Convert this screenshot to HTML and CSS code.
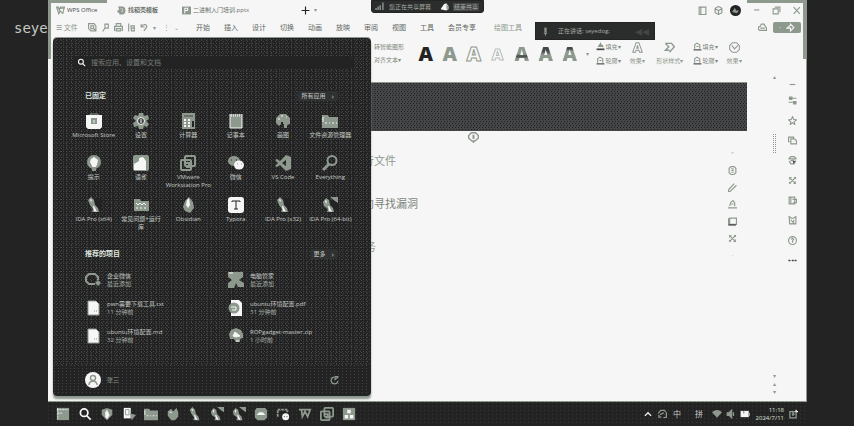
FILE: index.html
```html
<!DOCTYPE html>
<html lang="zh-CN">
<head>
<meta charset="utf-8">
<title>WPS Office</title>
<link rel="stylesheet" href="styles.css">
</head>
<body>
<svg class="defs" aria-hidden="true">
  <symbol id="search" viewBox="0 0 16 16"><circle cx="7" cy="6.500" r="4.300" fill="none" stroke="currentColor" stroke-width="2"/><path d="M10 10l4.500 4.500" stroke="currentColor" stroke-width="2"/></symbol>
  <symbol id="ida" viewBox="0 0 16 16"><path d="M8 1h8v11l-5 2z" fill="#232323"/><path d="M2 3l3-3 3 3 1 5 3 3 1 4H6l1-3-3-4z" fill="#8e998e"/><path d="M4 2l2 1-1 2zM7 9l1 5 3 1-3-6z" fill="#f6f6f6"/></symbol>
  <symbol id="ida64" viewBox="0 0 16 16"><path d="M8 4h7v8l-5 2z" fill="#232323"/><path d="M8 0h8v6l-3-2z" fill="#8e998e"/><path d="M1 5l3-4 3 2 1 5 3 3 1 4H5l1-3-4-3z" fill="#8e998e"/><path d="M3 3l2 1-1 3zM6 9l1 5 3 1-3-6z" fill="#f6f6f6"/></symbol>
  <symbol id="vm" viewBox="0 0 16 16"><g fill="none" stroke="#8e998e" stroke-width="2"><rect x="5" y="1" width="10" height="10" rx="1"/><rect x="1" y="5" width="10" height="10" rx="1"/><path d="M5 8h4v4H6"/></g></symbol>
  <symbol id="folder" viewBox="0 0 16 16"><path d="M0 2h6l1 2h9v11H0z" fill="#8e998e"/><path d="M1 4v5M3 10h2m2 0h1m2 0h2m2 0h1" stroke="#f6f6f6"/></symbol>
  <symbol id="file" viewBox="0 0 16 16"><path d="M3 1h8l3 3v11H3z" fill="#f6f6f6" stroke="#8e998e"/><path d="M9 11h1m1 0h1" stroke="#8e998e"/></symbol>
  <symbol id="bucket" viewBox="0 0 16 16"><path d="M8 1v4M4 9l2-4h4l3 4" fill="#8e998e" stroke="#8e998e" stroke-width="2"/><path d="M1 13h14" stroke="#444547" stroke-width="3"/></symbol>
  <symbol id="pen" viewBox="0 0 16 16"><path d="M3 12V5l4-3 5 3v7M6 8h4" fill="none" stroke="#8e998e" stroke-width="2"/><path d="M1 14h14" stroke="#444547" stroke-width="2"/></symbol>
  <symbol id="tools" viewBox="0 0 16 16"><path d="M2 2l12 12M14 2L2 14M2 6l4-4M10 14l4-4M11 2l3 3M2 11l3 3" fill="none" stroke="currentColor" stroke-width="2"/></symbol>
  <symbol id="copy" viewBox="0 0 16 16"><path d="M5 14h10V8l-4-3H5zM3 10H1V2h9v3" fill="none" stroke="currentColor" stroke-width="2"/></symbol>
</svg>
<div class="desktop">
  <div class="terminal">seye</div>
  <main class="window">
    <header class="titlebar">
      <div class="tab tab-home"><svg class="i8" viewBox="0 0 16 16"><path d="M1 2h3l2 6 2-6h7l-3 11-4-4-3 5z" fill="none" stroke="#8e998e" stroke-width="2"/><path d="M3 4h11" stroke="#8e998e" stroke-width="2"/></svg>WPS Office</div>
      <div class="tab tab-docer"><svg class="i8" viewBox="0 0 16 16"><path d="M2 1h7a6 7 0 0 1 0 14H4v-3H1V7h3z" fill="#8e998e"/><path d="M6 5h4v5H7" fill="none" stroke="#f6f6f6"/></svg><b>找稻壳模板</b></div>
      <div class="tab tab-file"><svg class="i8" viewBox="0 0 16 16"><path d="M0 1h16v14H0z" fill="#8e998e"/><path d="M5 13V4h5v4H5" fill="none" stroke="#f6f6f6" stroke-width="2"/></svg>二进制入门培训.pptx</div>
      <button class="plus" aria-label="新建"><svg class="i8" viewBox="0 0 16 16"><path d="M8 1v14M1 8h14" stroke="#232323" stroke-width="2"/></svg></button><small>▾</small>
      <div class="winctl">
        <svg class="i8 near" viewBox="0 0 16 16"><path d="M2 2h12v13H2zM5 2v13" fill="none" stroke="#8e998e" stroke-width="2"/></svg>
        <svg class="i8 near" viewBox="0 0 16 16"><path d="M8 1l6 3v8l-6 3-6-3V4zM2 5l6 3 6-3M8 8v7" fill="none" stroke="#8e998e" stroke-width="2"/></svg>
        <svg class="i10" viewBox="0 0 16 16"><circle cx="8" cy="8" r="8" fill="#232323"/><path d="M3 10l4-6 2 4h4l-3 4z" fill="#8e998e"/></svg>
        <button aria-label="最小化"><svg class="i8" viewBox="0 0 16 16"><path d="M4 7h9" stroke="#8e998e" stroke-width="2"/></svg></button>
        <button aria-label="还原"><svg class="i8" viewBox="0 0 16 16"><path d="M2 5h9v9H2zM5 2h9v9" fill="none" stroke="#8e998e" stroke-width="2"/></svg></button>
        <button aria-label="关闭"><svg class="i8" viewBox="0 0 16 16"><path d="M3 2l11 12M14 2L3 14" stroke="#8e998e" stroke-width="2"/></svg></button>
      </div>
    </header>
    <nav class="menubar">
      <button class="filebtn">☰ 文件</button>
      <div class="quick">
        <svg class="i8" viewBox="0 0 16 16"><path d="M1 1h10l3 4v9H5l-4-4zM5 5h5v5H5zM9 9l5 5" fill="none" stroke="#8e998e" stroke-width="2"/></svg>
        <svg class="i8" viewBox="0 0 16 16"><path d="M3 15l4-6V2h6v7H7" fill="none" stroke="#8e998e" stroke-width="2"/></svg>
        <svg class="i8" viewBox="0 0 16 16"><path d="M4 6V1h8v5M1 14V6h14v8M4 14v-4h8v4z" fill="none" stroke="#8e998e" stroke-width="2"/></svg>
        <svg class="i8" viewBox="0 0 16 16"><path d="M3 1v14M7 5h6v9H8zM7 9h6" fill="none" stroke="#8e998e" stroke-width="2"/></svg>
        <svg class="i8" viewBox="0 0 16 16"><path d="M2 2v5h6M2 7c3-6 11-5 10 0l-5 7" fill="none" stroke="#8e998e" stroke-width="2"/></svg><small>▾</small>
        <span>⋮</span><small>⌄</small>
      </div>
      <div class="menus"><a>开始</a><a>插入</a><a>设计</a><a>切换</a><a>动画</a><a>放映</a><a>审阅</a><a>视图</a><a>工具</a><a>会员专享</a><a class="draw">绘图工具</a></div>
      <svg class="i8 cloud" viewBox="0 0 16 16"><path d="M1 12V7l3-1 2-4h5l2 4 2 2v5H3zM4 9h8" fill="none" stroke="#8e998e" stroke-width="2"/></svg>
      <button class="share" aria-label="分享"><span>·</span><svg class="i8" viewBox="0 0 16 16"><path d="M8 2l6 6-6 6V9H2l6-5z" fill="none" stroke="#f6f6f6" stroke-width="2"/></svg></button>
    </nav>
    <section class="ribbon">
      <div class="pair"><span>转智能图形</span><span>对齐文本▾</span></div>
      <div class="styles"><b class="a1">A</b><b>A</b><b class="a3">A</b><b class="a4">A</b><b class="a5">A</b><b class="a6">A</b><b class="a7">A</b></div>
      <small class="dot">▾</small>
      <div class="pair"><span><svg class="i8"><use href="#bucket"/></svg>填充▾</span><span><svg class="i8"><use href="#pen"/></svg>轮廓▾</span></div>
      <div class="big"><svg class="i10" viewBox="0 0 16 16"><path d="M1 15L6 1h4l5 14h-4l-1-3H6l-1 3zM7 9h2L8 5z" fill="none" stroke="#8e998e" stroke-width="1.500"/></svg><span>效果▾</span></div>
      <div class="big shape"><svg class="i10" viewBox="0 0 16 16"><path d="M2 2h9l4 5-7 8M2 2l5 5-5 5h6" fill="none" stroke="#8e998e" stroke-width="2"/></svg><span>形状样式▾</span></div>
      <div class="pair"><span><svg class="i8"><use href="#pen"/></svg>填充▾</span><span><svg class="i8"><use href="#pen"/></svg>轮廓▾</span></div>
      <div class="big"><svg class="i10" viewBox="0 0 16 16"><path d="M5 1h6l4 4v6l-4 4H5l-4-4V5zM4 5l4 5 5-5" fill="none" stroke="#8e998e" stroke-width="1.500"/></svg><span>效果▾</span></div>
    </section>
    <div class="work">
      <article class="page">
        <div class="banner"></div>
        <div class="locate"><svg class="i10" viewBox="0 0 16 16"><path d="M5 1h6l4 4v4l-5 4H6L1 9V5zM8 13v3" fill="none" stroke="#8e998e" stroke-width="2"/><path d="M8 4v6" stroke="#8e998e" stroke-width="3"/></svg></div>
        <div class="sheet">
          <div class="lines"><p>运行文件</p><p>逆向寻找漏洞</p><p class="indent">服务</p></div>
          <div class="float">
            <span>"</span>
            <svg class="i8" viewBox="0 0 16 16"><path d="M5 1L2 4v8l3 3M11 1l3 3v8l-3 3M5 1h6M5 15h6M6 5h4M6 8h4M6 11h4" fill="none" stroke="#8e998e" stroke-width="2"/></svg>
            <svg class="i8" viewBox="0 0 16 16"><path d="M1 12L11 1M4 15L15 4M1 12v3h3" fill="none" stroke="#8e998e" stroke-width="2"/></svg>
            <svg class="i8" viewBox="0 0 16 16"><path d="M3 11l2-7 4-3 3 4v6M6 7h4M0 14h16" fill="none" stroke="#8e998e" stroke-width="2"/></svg>
            <svg class="i8" viewBox="0 0 16 16"><path d="M3 2h12v11H3zM1 2v12h13" fill="none" stroke="#8e998e" stroke-width="2"/><path d="M1 14h13" stroke="#444547" stroke-width="2"/></svg>
            <svg class="i8"><use href="#tools"/></svg>
            <span>·</span>
          </div>
        </div>
      </article>
      <div class="scroll"><span>▴</span><i></i><div><span>▾</span><span>▴</span><span>▾</span></div></div>
      <aside class="side">
        <svg class="i8" viewBox="0 0 16 16"><path d="M3 8h10" stroke="#8e998e" stroke-width="2"/></svg>
        <svg class="i8" viewBox="0 0 16 16"><path d="M1 4h14M1 11h14" stroke="#8e998e" stroke-width="2"/><path d="M2 1h6v6H2zM9 9h6v6H9z" fill="#8e998e"/></svg>
        <svg class="i8" viewBox="0 0 16 16"><path d="M8 1l2 5 5 1-4 3 1 5-4-3-4 3 1-5-4-3 5-1z" fill="none" stroke="#8e998e" stroke-width="2"/></svg>
        <svg class="i8"><use href="#copy"/></svg>
        <svg class="i8" viewBox="0 0 16 16"><path d="M1 5l4-4h6l4 4M1 5h14M2 9l3 5h6l3-6M4 9l6-2" fill="none" stroke="#8e998e" stroke-width="2"/><path d="M8 8l5 1-3 5z" fill="#444547"/></svg>
        <svg class="i8"><use href="#tools"/></svg>
        <svg class="i8" viewBox="0 0 16 16"><path d="M5 1v14M2 2h10v12H2zM8 6h7v6H9" fill="none" stroke="#8e998e" stroke-width="2"/></svg>
        <svg class="i8" viewBox="0 0 16 16"><path d="M2 1l4 3h4l4-3v13H3zM5 7l6 6M11 7l-4 6" fill="none" stroke="#8e998e" stroke-width="2"/></svg>
        <svg class="i8" viewBox="0 0 16 16"><circle cx="8" cy="8" r="7" fill="none" stroke="#8e998e" stroke-width="2"/><path d="M5 6l3-2 2 2-2 3v3" fill="none" stroke="#8e998e" stroke-width="2"/></svg>
        <svg class="i8" viewBox="0 0 16 16"><path d="M0 8h16" stroke="#8e998e"/><path d="M1 8h3M7 8h3M12 8h3" stroke="#444547" stroke-width="3"/></svg>
      </aside>
    </div>
    <i class="corner left"></i><i class="corner right"></i>
  </main>

  <div class="sharebar"><svg class="i10" viewBox="0 0 16 16"><path d="M3 13v-3M6 13V8M9 13V6M13 13V2" stroke="#8e998e" stroke-width="2"/></svg><span>您正在共享屏幕</span><svg class="i8" viewBox="0 0 16 16"><path d="M1 13L7 4l4-2 4 5v6l-4 2z" fill="#f6f6f6"/><path d="M11 4l4 4v4l-3 2z" fill="#8e998e"/></svg><button>结束共享</button></div>
  <div class="speaking"><svg class="i8" viewBox="0 0 16 16"><path d="M8 1v9" stroke="#8e998e" stroke-width="4"/><path d="M5 11h6M8 11v4" stroke="#8e998e" stroke-width="2"/></svg><span>正在讲话: seyedog;</span><em>◂◂</em></div>

  <section class="start">
    <label class="searchbox"><svg class="i8"><use href="#search"/></svg><input type="text" placeholder="搜索应用、设置和文档" aria-label="搜索"></label>
    <div class="head pinned"><h2>已固定</h2><button>所有应用<span>›</span></button></div>
    <div class="apps">
      <a><svg viewBox="0 0 16 16"><path d="M4 3V1h8v2" fill="none" stroke="#8e998e"/><path d="M0 2h16v12l-2 2H2l-2-2z" fill="#f6f6f6"/><path d="M5 5h6v6H5z" fill="#8e998e"/><path d="M8 7v3" stroke="#f6f6f6"/></svg>Microsoft Store</a>
      <a><svg viewBox="0 0 16 16"><path d="M6 0h4l1 3 4-1 1 4-3 2 3 3-2 3-3-1-1 3H6l-1-3-4 1-1-4 3-2-3-3 2-3 3 1z" fill="#8e998e"/><circle cx="8" cy="8" r="3.500" fill="#444547" stroke="#f6f6f6"/><path d="M8 6v4" stroke="#f6f6f6"/></svg>设置</a>
      <a><svg viewBox="0 0 16 16"><path d="M2 0h13v16H2z" fill="#8e998e"/><path d="M4 6h2v2H4zm4 0h2v2H8zm-4 3h2v2H4zm4 0h2v2H8zm-4 3h2v2H4zm4 0h2v2H8z" fill="#f6f6f6"/><path d="M12 8h2v6h-2z" fill="#232323"/><path d="M4 3h9" stroke="#444547"/></svg>计算器</a>
      <a><svg viewBox="0 0 16 16"><path d="M2 1h12v14H2z" fill="#8e998e"/><path d="M3 2h10M3 3h10" stroke="#f6f6f6" stroke-dasharray="1 1"/><path d="M2 1v14h12V1" fill="none" stroke="#f6f6f6"/></svg>记事本</a>
      <a><svg viewBox="0 0 16 16"><path d="M1 5l4-4h6l4 4v6l-3 1v3H9v-4H6l-2 2-3-3z" fill="#8e998e"/><path d="M3 6h2M6 3h2M11 4h1" stroke="#f6f6f6"/><path d="M6 9h2v2H6z" fill="#232323"/></svg>画图</a>
      <a><svg><use href="#folder"/></svg>文件资源管理器</a>
      <a><svg viewBox="0 0 16 16"><circle cx="8" cy="7" r="7" fill="#8e998e"/><path d="M5 4l3-2 4 3-1 5-2 3H7L4 7z" fill="#f6f6f6"/><path d="M6 12h4v4H6z" fill="#8e998e"/></svg>提示</a>
      <a><svg viewBox="0 0 16 16"><rect x="0" y="0" width="16" height="16" rx="2" fill="#8e998e"/><path d="M1 15V9l5-3V3l4-1 3 4v9z" fill="#f6f6f6"/></svg>语雀</a>
      <a><svg><use href="#vm"/></svg>VMware Workstation Pro</a>
      <a><svg viewBox="0 0 16 16"><ellipse cx="6" cy="6" rx="6" ry="5" fill="#8e998e"/><ellipse cx="11" cy="10" rx="5" ry="4.500" fill="#f6f6f6"/><path d="M3 5h1m4 0h1" stroke="#232323"/><path d="M9 9h1m3 0h1" stroke="#8e998e"/></svg>微信</a>
      <a><svg viewBox="0 0 16 16"><path d="M11 0l5 2v12l-5 2-6-6-3 2-2-1 3-3-3-3 2-1 3 2zM11 5L7 8l4 3z" fill="#8e998e" fill-rule="evenodd"/></svg>VS Code</a>
      <a><svg viewBox="0 0 16 16"><circle cx="10" cy="5.500" r="4.500" fill="none" stroke="#8e998e" stroke-width="2"/><path d="M7 9l-6 6" stroke="#8e998e" stroke-width="3"/></svg>Everything</a>
      <a><svg><use href="#ida"/></svg>IDA Pro (x64)</a>
      <a><svg viewBox="0 0 16 16"><path d="M1 2h6l1 2h8v10H1z" fill="#8e998e"/><path d="M3 6l2 2 2-2 2 2 2-2 2 2M3 11h2m2 0h2m2 0h2" fill="none" stroke="#f6f6f6"/></svg>常见问题+运行<br>库</a>
      <a><svg viewBox="0 0 16 16"><path d="M5 4l4-4 4 5 1 6-4 5-5-2-2-4z" fill="#8e998e"/><path d="M7 3l2-2 1 7-2 3-2-3z" fill="#f6f6f6"/></svg>Obsidian</a>
      <a><svg viewBox="0 0 16 16"><rect width="16" height="16" rx="3" fill="#f6f6f6"/><path d="M4 5V4h8v1M8 4v8M6 12h4" fill="none" stroke="#232323"/></svg>Typora</a>
      <a><svg><use href="#ida"/></svg>IDA Pro (x32)</a>
      <a><svg><use href="#ida64"/></svg>IDA Pro (64-bit)</a>
    </div>
    <div class="head more"><h2>推荐的项目</h2><button>更多<span>›</span></button></div>
    <div class="recent">
      <a><svg viewBox="0 0 16 16"><path d="M10 12H4L1 9V5l3-3h6l3 3v3" fill="none" stroke="#8e998e" stroke-width="2"/><path d="M13 8l3 3-3 3-3-3z" fill="#8e998e"/></svg><span>企业微信<small>最近添加</small></span></a>
      <a><svg viewBox="0 0 16 16"><path d="M0 0h15v5l-4 3 5 3v4h-6l-2-4-2 5H0v-5l4-3-4-3z" fill="#8e998e"/><path d="M1 1h4" stroke="#f6f6f6"/></svg><span>电脑管家<small>最近添加</small></span></a>
      <a><svg><use href="#file"/></svg><span>pwn需要下载工具.txt<small>11 分钟前</small></span></a>
      <a><svg viewBox="0 0 16 16"><path d="M3 0h8l3 3v13H3z" fill="#f6f6f6"/><circle cx="6" cy="8" r="5.500" fill="#8e998e"/><path d="M3 7h5v3H4" fill="none" stroke="#f6f6f6"/></svg><span>ubuntu环境配置.pdf<small>31 分钟前</small></span></a>
      <a><svg><use href="#file"/></svg><span>ubuntu环境配置.md<small>32 分钟前</small></span></a>
      <a><svg viewBox="0 0 16 16"><path d="M8 0l5 2 2 4v4l-3 1v3H8l-2-3-4 0-1-5 2-4z" fill="#8e998e"/><path d="M5 8l2-4 5 4-4 1zM8 13h3" fill="#f6f6f6" stroke="#f6f6f6"/></svg><span>ROPgadget-master.zip<small>1 小时前</small></span></a>
    </div>
    <footer class="foot">
      <svg class="i16" viewBox="0 0 16 16"><circle cx="8" cy="8" r="8" fill="#f6f6f6"/><circle cx="8" cy="6" r="2.500" fill="none" stroke="#8e998e" stroke-width="1.500"/><path d="M4 13c0-5 8-5 8 0" fill="none" stroke="#8e998e" stroke-width="1.500"/></svg>
      <span>张三</span>
      <button aria-label="电源"><svg class="i8" viewBox="0 0 16 16"><path d="M7 2a6 6 0 1 0 7 7M9 7V1h6M9 7l5-5" fill="none" stroke="#8e998e" stroke-width="2"/></svg></button>
    </footer>
  </section>

  <footer class="taskbar">
    <div class="tasks">
      <svg viewBox="0 0 16 16"><path d="M1 1h14v14H1z" fill="#8e998e"/><path d="M1 3h13M2 7h6M2 1v13" stroke="#f6f6f6" stroke-dasharray="2 1"/></svg>
      <svg class="white"><use href="#search"/></svg>
      <svg viewBox="0 0 16 16"><path d="M8 1l6 2v6l-6 6-6-6V3z" fill="#8e998e"/><path d="M8 3l3 6-3 5-2-3V6z" fill="#f6f6f6"/></svg>
      <svg class="on" viewBox="0 0 16 16"><path d="M2 1h8v12H2z" fill="#f6f6f6"/><path d="M4 3h4v6H4z" fill="none" stroke="#8e998e"/><path d="M9 7l7 2-5 6z" fill="#8e998e"/></svg>
      <svg class="on"><use href="#folder"/></svg>
      <svg viewBox="0 0 16 16"><path d="M2 5l4-3 2 3 4-4 2 5v5l-4 4H6l-4-5z" fill="#8e998e"/><path d="M4 6h3" stroke="#f6f6f6"/></svg>
      <svg><use href="#ida"/></svg>
      <svg class="on"><use href="#ida64"/></svg>
      <svg class="on"><use href="#ida64"/></svg>
      <svg class="on" viewBox="0 0 16 16"><path d="M3 1h10l2 3v8l-3 3H4l-3-3V4z" fill="#8e998e"/><path d="M3 9l3-3h4l3 3z" fill="#f6f6f6"/></svg>
      <svg class="on" viewBox="0 0 16 16"><path d="M2 11V3h11v3" fill="none" stroke="#8e998e" stroke-width="2" stroke-dasharray="3 1"/><circle cx="11" cy="11" r="4" fill="#f6f6f6"/><path d="M9 11h1m2 0h1" stroke="#232323"/></svg>
      <svg class="on" viewBox="0 0 16 16"><path d="M1 3h3l1 8 3-6 3 6 3-8h-9" fill="none" stroke="#8e998e" stroke-width="2"/></svg>
      <svg class="on"><use href="#vm"/></svg>
      <svg class="on" viewBox="0 0 16 16"><path d="M1 1h14v14H1z" fill="#8e998e"/><path d="M6 3h4v4H6zM3 9h4v4H3zm6 0h4v4H9z" fill="#f6f6f6"/></svg>
    </div>
    <div class="tray">
      <svg viewBox="0 0 16 16"><path d="M3 11l5-5 5 5" fill="none" stroke="#f6f6f6" stroke-width="2"/></svg>
      <svg viewBox="0 0 16 16"><path d="M2 7l4-5h6l2 3M3 9v4h4M15 5v8l-5 1M5 9l6-3" fill="none" stroke="#8e998e" stroke-width="2"/></svg>
      <span>中</span><span class="pin">拼</span>
      <svg viewBox="0 0 16 16"><path d="M0 5q8-7 16 0l-8 9z" fill="#8e998e"/></svg>
      <svg viewBox="0 0 16 16"><path d="M2 6h3l4-4v12l-4-4H2zM12 5v6" fill="#8e998e" stroke="#8e998e" stroke-width="2"/></svg>
      <svg viewBox="0 0 16 16"><path d="M1 3h13v10H1z" fill="#f6f6f6"/><path d="M15 6v5M6 3v4" stroke="#8e998e" stroke-width="2"/></svg>
      <time>11:18<br>2024/7/11</time>
      <svg viewBox="0 0 16 16"><path d="M3 4h10v10H3zM6 8h5M8 4v7" fill="none" stroke="#8e998e" stroke-width="2"/><path d="M13 1v3h3" fill="none" stroke="#f6f6f6" stroke-width="2"/></svg>
    </div>
  </footer>
</div>
</body>
</html>
```
FILE: styles.css
```css
:root {
  --ink: #232323;
  --coal: #444547;
  --sage: #8e998e;
  --paper: #f6f6f6;
}
* { box-sizing: border-box; }
body {
  margin: 0;
  background: var(--ink);
  color: var(--sage);
  font: 6px/8px "Open Sans", "Noto Sans CJK SC", sans-serif;
}
button, input { font: inherit; color: inherit; background: none; border: 0; padding: 0; margin: 0; }
h2, p { margin: 0; }
svg { display: block; flex: none; }
small { font-size: 6px; }
.defs { position: absolute; width: 0; height: 0; }
.i8 { width: 9px; height: 9px; }
.i10 { width: 11px; height: 11px; }
.i16 { width: 16px; height: 16px; }

.desktop {
  position: relative;
  min-height: 100vh;
  display: grid;
  grid-template: 1fr 24px / 48px 1fr 47px;
  overflow: hidden;
}
.terminal {
  grid-row: 1 / 3;
  padding: 20px 0 0 14px;
  color: #c3cac3;
  font: 14px/17px "DejaVu Sans Mono", monospace;
}
.window {
  position: relative;
  display: flex;
  flex-direction: column;
  min-width: 0;
  background: var(--paper);
  border-right: 1px solid var(--sage);
  border-bottom: 1px solid var(--sage);
}
.corner { position: absolute; top: 0; width: 59px; height: 59px; border-top: 3px solid var(--sage); pointer-events: none; }
.corner.left { left: 0; border-left: 3px solid var(--sage); }
.corner.right { right: 0; border-right: 3px solid var(--sage); }

/* title bar */
.titlebar { display: flex; align-items: center; height: 20px; padding: 0 5px 0 8px; }
.tab { display: flex; align-items: center; gap: 2px; white-space: nowrap; color: #687068; }
.tab-home { width: 61px; color: var(--coal); }
.tab-docer { width: 65px; }
.tab-file { width: 119px; }
.plus { margin-right: 4px; }
.winctl { display: flex; align-items: center; gap: 11px; margin-left: auto; }
.winctl .near { margin-right: -4px; }

/* menu bar */
.menubar { display: flex; align-items: center; height: 15px; padding: 0 5px 0 8px; font-size: 7px; }
.filebtn { width: 32px; text-align: left; white-space: nowrap; }
.quick { display: flex; align-items: center; gap: 4px; width: 108px; }
.quick span { margin-left: 3px; }
.menus { display: flex; gap: 14px; flex: 1; white-space: nowrap; color: #5f675f; }
.draw { margin-left: 4px; color: var(--sage); }
.cloud { margin-right: 6px; }
.share { display: flex; align-items: center; justify-content: space-evenly; width: 28px; height: 11px; background: var(--sage); border-radius: 2px; color: var(--paper); }

/* ribbon */
.ribbon { display: flex; align-items: center; height: 47px; padding: 0 62px 10px 326px; white-space: nowrap; }
.pair { display: flex; flex-direction: column; gap: 5px; }
.pair span { display: flex; align-items: center; gap: 1px; }
.ribbon .pair { width: 32px; color: #7b857b; }
.big { display: flex; flex-direction: column; align-items: center; gap: 4px; width: 20px; }
.shape { width: 46px; }
.styles { display: flex; margin-left: 8px; font: bold 20px/20px "Noto Sans", sans-serif; }
.styles b { width: 24px; text-align: center; }
.a1 { color: var(--ink); }
.a3, .a4 { color: transparent; -webkit-text-stroke: 1px var(--sage); }
.a4 { font-size: 16px; opacity: .6; }
.a5, .a6, .a7 { background: linear-gradient(var(--coal) 35%, var(--sage) 55%); -webkit-background-clip: text; background-clip: text; color: transparent; }
.a5 { background-image: linear-gradient(var(--sage) 50%, var(--coal) 60%, var(--sage) 75%); }
.a7 { background-image: linear-gradient(var(--coal) 25%, var(--sage) 35%); }
.dot { width: 14px; padding-left: 4px; }

/* document */
.work { flex: 1; display: flex; min-height: 0; }
.page { flex: 1; display: flex; flex-direction: column; min-width: 0; }
.banner {
  height: 49px;
  margin-left: 8px;
  border-top: 1px solid var(--sage);
  background:
    conic-gradient(from 0deg at 1px 1px, transparent 75%, var(--ink) 0) 0 0 / 3px 4px,
    conic-gradient(from 0deg at 1px 1px, transparent 75%, var(--ink) 0) 1px 2px / 3px 4px,
    var(--coal);
}
.locate { display: flex; padding: 1px 0 0 420px; }
.sheet { display: flex; flex: 1; justify-content: space-between; }
.lines { padding: 8px 0 0 304px; font: 11px/18px "Noto Sans CJK SC", sans-serif; }
.lines p { margin-bottom: 25px; }
.lines p:nth-child(2) { color: #7b857b; }
.lines .indent { padding-left: 2px; }
.float { display: flex; flex-direction: column; align-items: center; gap: 8px; padding: 7px 10px 0 0; }
.scroll { width: 55px; display: flex; flex-direction: column; align-items: center; margin-top: -9px; padding-bottom: 5px; }
.scroll i { width: 3px; height: 20px; margin-top: 53px; background: conic-gradient(from 0deg at 1px 1px, transparent 75%, var(--sage) 0) 0 0 / 2px 2px; }
.scroll div { display: flex; flex-direction: column; margin-top: auto; }
.side { display: flex; flex-direction: column; gap: 11px; width: 9px; margin: -2px 9px 0 -14px; color: var(--sage); }
.side svg:first-child { margin-bottom: -4px; }

/* overlays */
.sharebar {
  position: absolute; top: 0; left: 371px;
  display: flex; align-items: center; gap: 4px;
  height: 13px; width: 113px; padding: 0 3px 0 2px;
  background: #2b2c2c; border: 1px solid var(--ink); border-radius: 0 0 3px 3px;
  color: #a5aea5; white-space: nowrap;
}
.sharebar span { width: 47px; }
.sharebar button { padding: 0 1px; background: var(--coal); }
.speaking {
  position: absolute; top: 22px; left: 535px;
  display: flex; align-items: center; gap: 8px;
  width: 120px; height: 18px; padding: 0 5px;
  background: #2b2c2c; border: 1px solid var(--ink);
  color: #a5aea5; white-space: nowrap;
}
.speaking em { margin-left: auto; color: var(--coal); font: 14px/14px "DejaVu Sans", sans-serif; }

.start {
  position: absolute; top: 38px; left: 53px;
  width: 318px; height: 358px;
  display: flex; flex-direction: column;
  border: 1px solid var(--ink); border-radius: 4px; overflow: hidden;
  box-shadow: 0 -1px 0 var(--sage), 0 3px 2px var(--sage);
  background:
    conic-gradient(from 0deg at 1px 1px, transparent 75%, var(--coal) 0) 0 0 / 3px 4px,
    conic-gradient(from 0deg at 1px 1px, transparent 75%, var(--coal) 0) 1px 2px / 4px 4px,
    conic-gradient(from 0deg at 1px 1px, transparent 75%, var(--coal) 0) 2px 1px / 5px 3px,
    var(--ink);
}
.searchbox {
  display: flex; align-items: center; gap: 5px;
  height: 13px; margin: 17px 16px 0 18px; padding-left: 5px;
  background: var(--ink); border-radius: 7px; color: var(--paper);
}
.searchbox input { flex: 1; font-size: 7px; outline: 0; }
.searchbox input::placeholder { color: #747b76; opacity: 1; }
.head { display: flex; align-items: center; justify-content: space-between; height: 10px; padding: 0 32px 0 31px; }
.pinned { margin-top: 22px; }
.more { margin-top: 10px; }
.head h2 { font-size: 7px; line-height: 10px; color: #dfe3df; }
.head button { display: flex; gap: 6px; height: 10px; padding: 0 4px; align-items: center; background: #303132; border-radius: 2px; color: #c3cac3; }
.head button span { font-size: 8px; }
.apps { display: grid; grid-template-columns: repeat(6, 1fr); grid-auto-rows: 42px; margin: 12px 16px 0; color: #c3cac3; text-align: center; }
.apps a { display: flex; flex-direction: column; align-items: center; margin: 0 -2px; }
.apps svg { width: 16px; height: 16px; margin-bottom: 2px; }
.recent { display: grid; grid-template-columns: 143px 1fr; grid-auto-rows: 28px; margin: 13px 0 0 31px; }
.recent a { display: flex; gap: 6px; color: #c3cac3; white-space: nowrap; }
.recent svg { width: 16px; height: 16px; }
.recent small { display: block; color: #a5aea5; }
.foot {
  display: flex; align-items: center; gap: 6px;
  height: 30px; margin-top: auto; padding: 0 31px;
  background:
    conic-gradient(from 0deg at 1px 1px, transparent 75%, var(--coal) 0) 0 0 / 4px 3px,
    var(--ink);
}
.foot button { margin-left: auto; }

/* taskbar */
.taskbar {
  grid-column: 2; display: flex; align-items: center; justify-content: space-between;
  padding: 0 9px 0 6px;
  background: conic-gradient(from 0deg at 1px 1px, transparent 75%, #38393a 0) 0 0 / 4px 4px, var(--ink);
}
.tasks, .tray { display: flex; align-items: center; }
.tasks { gap: 8px; padding-left: 2px; }
.tasks svg { width: 14px; height: 14px; }
.tasks .on { box-shadow: 0 4px 0 -2px var(--ink), 0 5px 0 -3px var(--sage); }
.white { color: var(--paper); }
.tray { gap: 4px; color: #c3cac3; }
.tray svg { width: 10px; height: 10px; }
.tray span { width: 12px; font-size: 8px; text-align: center; }
.tray .pin { margin: 0 3px 0 6px; }
.tray time { width: 30px; color: #dfe3df; text-align: right; }
```
